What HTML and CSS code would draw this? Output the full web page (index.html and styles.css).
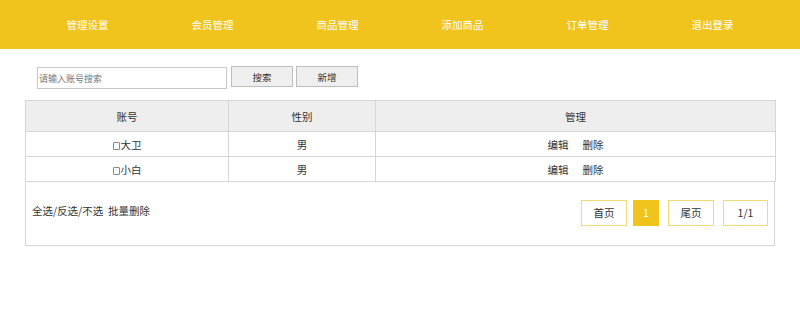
FILE: index.html
```html
<!DOCTYPE html>
<html lang="zh">
<head>
<meta charset="utf-8">
<link rel="stylesheet" href="styles.css">
</head>
<body>
<header class="topbar">
  <nav class="nav">
    <a>管理设置</a>
    <a>会员管理</a>
    <a>商品管理</a>
    <a>添加商品</a>
    <a>订单管理</a>
    <a>退出登录</a>
  </nav>
</header>
<main class="main">
  <div class="search">
    <input class="search-input" type="text" placeholder="请输入账号搜索">
    <button class="btn">搜索</button>
    <button class="btn btn-add">新增</button>
  </div>
  <table class="grid">
    <thead>
      <tr><th class="c1">账号</th><th class="c2">性别</th><th class="c3">管理</th></tr>
    </thead>
    <tbody>
      <tr><td><span class="chk"></span>大卫</td><td>男</td><td><span class="op">编辑</span><span class="op">删除</span></td></tr>
      <tr><td><span class="chk"></span>小白</td><td>男</td><td><span class="op">编辑</span><span class="op">删除</span></td></tr>
    </tbody>
  </table>
  <div class="foot">
    <div class="bulk">全选/反选/不选&nbsp;&nbsp;批量删除</div>
    <div class="pager">
      <a class="pg">首页</a>
      <a class="pg cur">1</a>
      <a class="pg">尾页</a>
      <a class="pg">1/1</a>
    </div>
  </div>
</main>
</body>
</html>
```
FILE: styles.css
```css
* { box-sizing: border-box; }
body {
  margin: 0;
  background: #fff;
  font-family: "Noto Sans CJK SC", "Noto Sans", sans-serif;
  font-size: 10.5px;
  color: #333;
}
.topbar {
  background: #f0c31d;
  height: 49px;
}
.nav {
  width: 750px;
  margin-left: 25px;
  display: flex;
  height: 49px;
  align-items: center;
}
.nav a {
  flex: 1;
  text-align: center;
  color: #fff;
  font-size: 10.5px;
  line-height: 16px;
}
.main {
  width: 750px;
  margin-left: 25px;
}
.search {
  display: flex;
  align-items: flex-start;
  padding: 17px 0 0 12px;
  height: 51px;
}
.search-input {
  width: 190px;
  height: 22px;
  margin: 1px 0 0 0;
  border: 1px solid #c8c8c8;
  padding: 0 1px;
  font-family: inherit;
  font-size: 9px;
  color: #333;
  outline: none;
}
.search-input::placeholder { color: #777; }
.btn {
  width: 62px;
  height: 21px;
  margin-left: 4px;
  border: 1px solid #bdbdbd;
  background: #efefef;
  font-family: inherit;
  font-size: 9.5px;
  color: #333;
  padding: 0;
}
.btn-add { margin-left: 3px; }
.grid {
  width: 750px;
  border-collapse: collapse;
  table-layout: fixed;
}
.grid th, .grid td {
  border: 1px solid #d6d6d6;
  text-align: center;
  font-weight: normal;
  padding: 0;
}
.grid th {
  background: #eeeeee;
  height: 31px;
}
.grid td { height: 25px; }
.c1 { width: 203px; }
.c2 { width: 147px; }
.c3 { width: 400px; }
.chk {
  display: inline-block;
  width: 7px;
  height: 8px;
  border: 1px solid #888;
  border-radius: 1px;
  margin-right: 1px;
  vertical-align: -1px;
}
.op { margin: 0 7px; }
.foot {
  height: 64px;
  border: 1px solid #d6d6d6;
  border-top: none;
  display: flex;
  align-items: center;
  justify-content: space-between;
  padding: 0 6px 0 6px;
}
.bulk { margin-top: -6px; }
.pager {
  display: flex;
  align-items: center;
  margin-top: -2px;
}
.pg {
  width: 46px;
  height: 26px;
  border: 1px solid #f0d976;
  display: flex;
  align-items: center;
  justify-content: center;
  margin-left: 9px;
  color: #333;
}
.pg:first-child { margin-left: 0; }
.pg:last-child { width: 45px; }
.pg.cur {
  width: 26px;
  background: #f0c31d;
  border-color: #f0c31d;
  color: #fff;
  margin-left: 6px;
}
```
